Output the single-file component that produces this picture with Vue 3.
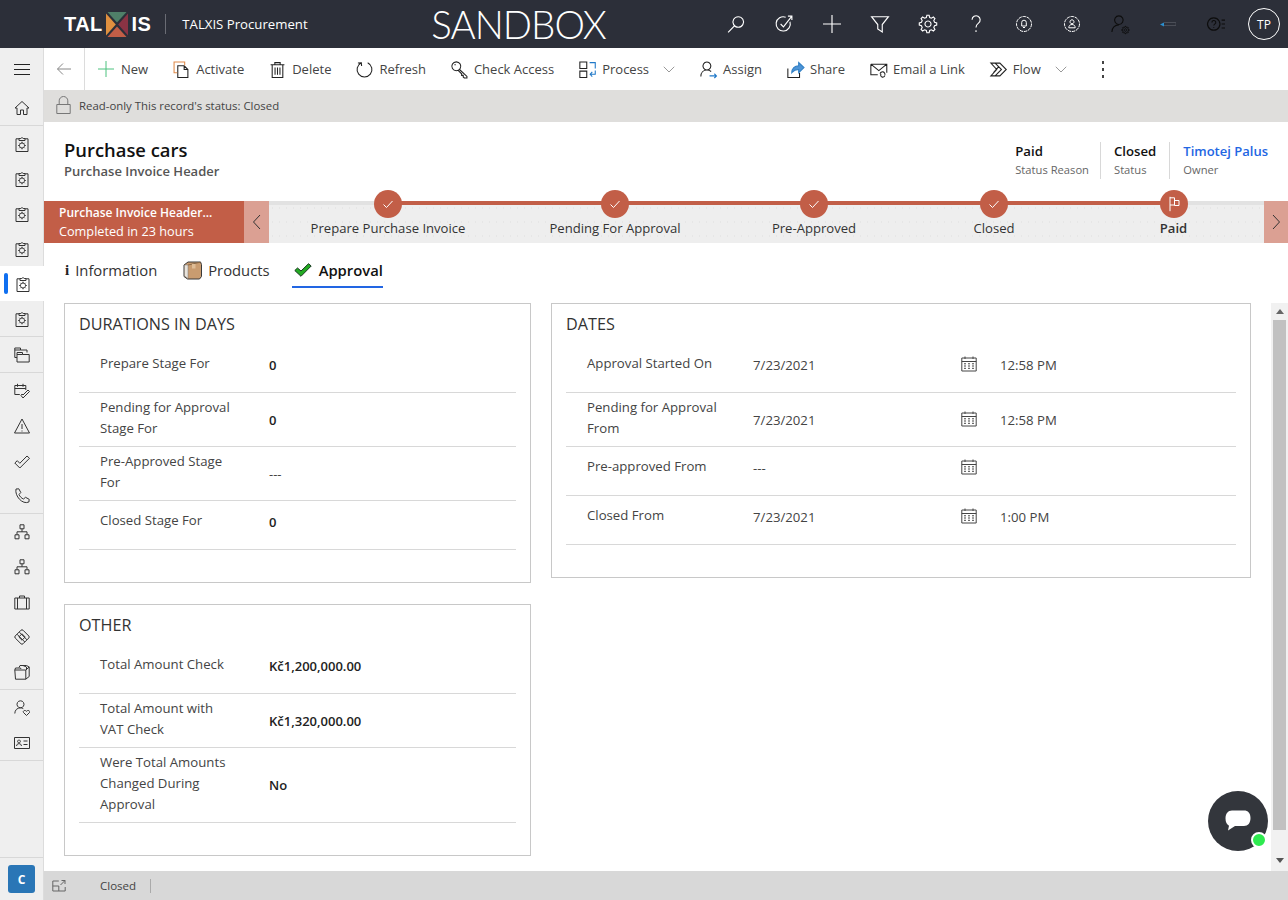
<script setup>
// gear outline for the settings button
function gearPath(cx, cy, outer, inner, teeth) {
  const step = (Math.PI * 2) / teeth
  const pts = []
  for (let i = 0; i < teeth; i++) {
    const a = i * step
    pts.push([a - step * 0.16, outer], [a + step * 0.16, outer], [a + step * 0.32, inner], [a + step * 0.68, inner])
  }
  const d = pts.map(([a, r], i) => `${i ? 'L' : 'M'}${(cx + Math.cos(a) * r).toFixed(2)} ${(cy + Math.sin(a) * r).toFixed(2)}`)
  return d.join('') + 'z'
}

const icons = {
  search: 'M10 1.5a4.7 4.7 0 1 1-.01 0zM6.6 9.6 1 15.5',
  target: 'M13.3 6A6.3 6.3 0 1 1 9.500 2M5 8l2.500 2.500L15 1M11.500 1H15v3.500',
  plus: 'M8 0v16M0 8h16',
  filter: 'M.5 1.500h15L10 8.500V15l-4-2.500V8.500z',
  gear: gearPath(8, 8, 7.8, 6, 8) + 'M8 5.300a2.700 2.700 0 1 1-.01 0z',
  question: 'M4.500 4.200a3.600 3.600 0 1 1 5.700 3C8.800 8.300 8 9.200 8 11M8 13.500V15',
  bell: 'M8 4.200a2.300 2.300 0 0 1 2.300 2.300V10H5.700V6.500A2.300 2.300 0 0 1 8 4.200zM7 11.500h2',
  person: 'M8 3.800a2 2 0 1 1-.01 0zM4.800 11.800c0-2 1.200-3.300 3.200-3.300s3.200 1.300 3.200 3.300z',
  personGear: 'M7 .8a3.800 3.800 0 1 1-.01 0zM.8 15c0-3.600 2.600-6.200 6.200-6.200',
  helpList: 'M6 2.500a5.500 5.500 0 1 1-.01 0zM4.400 6.700a1.700 1.700 0 1 1 2.500 1.400c-.6.4-.9.7-.9 1.300M6 10.800v.8M13 4.500h3M13 8h3M13 11.500h3',
  back: 'M15 8H1.500M7 2.500 1.500 8 7 13.500',
  activate: 'M4.500 4.500h6l3.500 3.500v7.500H4.500zM10.500 4.500V8H14',
  trash: 'M1.500 3.500h13M5.500 3.500v-2h5v2M3 3.500v12h10v-12M5.700 6v7M8 6v7M10.300 6v7',
  refresh: 'M5 1.700A7 7 0 1 0 11 1.700M1.800 1.800 5 1.700l.3 3',
  key: 'M5 .8a4.200 4.200 0 1 1-.01 0zM8 8l7 6.500V16h-2.500l-1-1v-1.500H10V12L6.700 8.800M3.200 3.500h1.300',
  process: 'M.8 1h6.500v6H.8zM.8 9.500h6.500v6H.8z',
  assign: 'M6.500 1a3.700 3.700 0 1 1-.01 0zM.8 14.500c0-3.500 2.400-6 5.700-6 1.600 0 3 .5 4 1.400',
  share: 'M.8 7v8.500h11V11',
  email: 'M.8 3h15v8M.8 3v10h6.500M.8 3l7.500 6 7.500-6M9.500 12a2.300 2.300 0 1 1 4.500 1M14 13.500a2 2 0 1 1-3.600-1.500',
  flow: 'M.8 2h8.500l6 6-6 6H.8l5.500-6zM4.800 2l6 6-6 6M3.300 11 8 5.500',
  chevron: 'M1 5l7 7 7-7',
  home: 'M8 1.500 1 8h2v6.500h3.500V10h3v4.500H13V8h2z',
  clip: 'M5 2.800H2v12.700h12V2.800h-3M5 4.500v-2h1.800a1.300 1.300 0 0 1 2.400 0H11v2zM8 7a2.500 2.500 0 1 1-.01 0zM8 5.700v1.300M8 12v1.300M4.200 9.500h1.300M10.500 9.500h1.300M5.300 6.800l1 1M9.700 11.200l1 1M10.700 6.800l-1 1M6.300 11.200l-1 1',
  folders: 'M.8 1h5.700v2h6.500v2.500M.8 1v9.500H3M.8 3h5.700M3 5.500h5.500v2h6.700V15H3zM3 7.500h5.500',
  task: 'M.8 2.500h11V7M.8 2.500v9h5M3.500 .8v3M9 .8v3M.8 5.500h11M7 12.500l2 2.500 6.500-6.500L14 7l-5 5-1-1z',
  warning: 'M8 1 15.500 15H.5zM8 6v5M8 12.500v1',
  check: 'M.8 10l5 5L15.500 5.300 13 3 5.800 10.300 3.300 7.700z',
  phone: 'M2 1 4.800.8l2 3.700L5 6.500c.8 2 2.500 3.800 4.500 4.500L11.500 9.300l3.700 2-.3 2.700C8.500 17 .5 8 2 1z',
  tree: 'M6 .8h4v4H6zM1 10.800h4v4H1zM11 10.800h4v4h-4zM8 4.800v3M3 10.800V7.800h10v3',
  case: 'M.8 4h14.400v11H.8zM5.500 4V2h5v2M3.500 4v11M12.500 4v11',
  deal: 'M7 1.200a1.500 1.500 0 0 1 2 0l5.800 5.800a1.500 1.500 0 0 1 0 2L9 14.800a1.500 1.500 0 0 1-2 0L1.200 9a1.500 1.500 0 0 1 0-2zM3 5.200 10.800 13M5.200 3 13 10.800M4.800 8 8 4.800 11.200 8 8 11.200z',
  archive: 'M.8 6h11v9.200H1.500zM.8 6l.7-2h5l.5 1M5 3.500 6 1.500h6.500L15.200 3v9.500l-3.500 2.700M11.800 6l3.400-3M9 1.500l3.500 1.500V6',
  personHeart: 'M6.500 .8a3.500 3.500 0 1 1-.01 0zM.8 13.500c0-3.300 2.400-5.700 5.700-5.700 1 0 2 .3 2.800.8M12.500 15.500l-3-3c-1-1.600 1.500-3 3-1.200 1.500-1.800 4-.4 3 1.200z',
  card: 'M.5 2.500h15v11H.5zM5 5a1.400 1.400 0 1 1-.01 0zM2.600 11c0-1.500 1-2.300 2.400-2.300s2.400.8 2.400 2.300M9.500 6h4M9.500 9.500h4',
  lock: 'M.8 8.500h13.400v9H.8zM3.200 8.500V4.800a4.300 4.300 0 0 1 8.600 0v3.700',
  calendar: 'M.8 2h14.400v13H.8zM.8 5.500h14.400M4 .5V3M12 .5V3M3 7.800h2M7 7.800h2M11 7.800h2M3 10h2M7 10h2M11 10h2M3 12.300h2M7 12.300h2M11 12.300h2',
  expand: 'M.8 2h6M.8 2v10h12.400V8M.8 7h6v5M8.500 6l4.500-4.500M9.500 1.500H13V5',
  flag: 'M4 .8v14.400M4 1.800h4.500V9H4M8.500 4.500H13V9.500H8.500z',
  tick: 'M3.500 8.500l3 3 6-6.500',
}

// coloured second stroke of some command icons
const accents = {
  activate: { d: 'M4 11H1V1h10v3', tone: 'orange' },
  process: { d: 'M10 1.500h5.300v5.500M15.300 9v3.500H10.500M12.500 10.300l-2 2.200 2 2.200', tone: 'blue' },
  assign: { d: 'M9 14h6.500M13.500 12l2 2-2 2', tone: 'blue' },
}

const commands = [
  { label: 'Activate', icon: 'activate' },
  { label: 'Delete', icon: 'trash' },
  { label: 'Refresh', icon: 'refresh' },
  { label: 'Check Access', icon: 'key' },
  { label: 'Process', icon: 'process', chevron: true },
  { label: 'Assign', icon: 'assign' },
  { label: 'Share', icon: 'share' },
  { label: 'Email a Link', icon: 'email' },
  { label: 'Flow', icon: 'flow', chevron: true },
]

const navGroups = [
  ['home'],
  ['clip', 'clip', 'clip', 'clip', 'clip', 'clip'],
  ['folders'],
  ['task', 'warning', 'check', 'phone'],
  ['tree', 'tree', 'case', 'deal', 'archive'],
  ['personHeart', 'card'],
]

const stages = [
  { label: 'Prepare Purchase Invoice' },
  { label: 'Pending For Approval' },
  { label: 'Pre-Approved' },
  { label: 'Closed' },
  { label: 'Paid', current: true },
]

const durations = [
  { label: 'Prepare Stage For', value: '0' },
  { label: 'Pending for Approval Stage For', value: '0', lines: 2 },
  { label: 'Pre-Approved Stage For', value: '---', lines: 2, empty: true },
  { label: 'Closed Stage For', value: '0' },
]

const other = [
  { label: 'Total Amount Check', value: 'Kč1,200,000.00' },
  { label: 'Total Amount with VAT Check', value: 'Kč1,320,000.00', lines: 2 },
  { label: 'Were Total Amounts Changed During Approval', value: 'No', lines: 3 },
]

const dates = [
  { label: 'Approval Started On', date: '7/23/2021', time: '12:58 PM' },
  { label: 'Pending for Approval From', date: '7/23/2021', time: '12:58 PM', lines: 2 },
  { label: 'Pre-approved From', date: '---', time: '', empty: true },
  { label: 'Closed From', date: '7/23/2021', time: '1:00 PM' },
]
</script>

<template>
  <div class="page">
    <header class="topbar">
      <div class="logo">
        <span>TAL</span>
        <svg class="art logo-x" width="22" height="25" viewBox="0 0 22 25">
          <path d="M1.500 0h19L11 10.500z" fill="#4f7f68" />
          <path d="M0 1.500V23.500L9.800 12.500z" fill="#e0903f" />
          <path d="M22 1.500V23.500L12.200 12.500z" fill="#8a3344" />
          <path d="M1.500 25h19L11 14.500z" fill="#c25e47" />
        </svg>
        <span>IS</span>
      </div>
      <div class="app-name">TALXIS Procurement</div>
      <div class="sandbox">SANDBOX</div>
      <div class="top-icons">
        <span class="top-icon"><svg class="i18" viewBox="0 0 16 16"><path :d="icons.search" /></svg></span>
        <span class="top-icon"><svg class="i18" viewBox="0 0 16 16"><path :d="icons.target" /></svg></span>
        <span class="top-icon"><svg class="i18" viewBox="0 0 16 16"><path :d="icons.plus" /></svg></span>
        <span class="top-icon"><svg class="i18" viewBox="0 0 16 16"><path :d="icons.filter" /></svg></span>
        <span class="top-icon"><svg class="i18" viewBox="0 0 16 16"><path :d="icons.gear" /></svg></span>
        <span class="top-icon"><svg class="i18" viewBox="0 0 16 16"><path :d="icons.question" /></svg></span>
        <span class="top-icon">
          <svg class="i16" viewBox="0 0 16 16"><circle class="dashed" cx="8" cy="8" r="7.500" /><path :d="icons.bell" /></svg>
        </span>
        <span class="top-icon">
          <svg class="i16" viewBox="0 0 16 16"><circle class="dashed" cx="8" cy="8" r="7.500" /><path :d="icons.person" /></svg>
        </span>
        <span class="top-icon dark">
          <svg class="i18" viewBox="0 0 16 16">
            <path :d="icons.personGear" />
            <path class="small-gear" :d="icons.gear" transform="translate(9.500 10) scale(.42)" />
          </svg>
        </span>
        <span class="top-icon">
          <svg class="art" width="16" height="5" viewBox="0 0 16 5">
            <path d="M4 .5h12v3H4" fill="none" stroke="#4b4e57" />
            <path d="M0 2.500l4-2v4z" fill="#2a8fd0" />
          </svg>
        </span>
        <span class="top-icon dark"><svg class="i18" viewBox="0 0 16 16"><path :d="icons.helpList" /></svg></span>
        <span class="top-icon"><span class="avatar">TP</span></span>
      </div>
    </header>

    <div class="body">
      <nav class="sidebar">
        <div class="burger"><span></span><span></span><span></span></div>
        <div v-for="(group, g) in navGroups" :key="g" class="nav-group">
          <div
            v-for="(name, n) in group"
            :key="n"
            class="nav-item"
            :class="{ selected: g === 1 && n === 4 }"
          >
            <svg class="i16" viewBox="0 0 16 16"><path :d="icons[name]" /></svg>
          </div>
        </div>
        <div class="nav-bottom"><span class="badge">C</span></div>
      </nav>

      <main class="main">
        <div class="commandbar">
          <div class="back"><svg class="i16 grey" viewBox="0 0 16 16"><path :d="icons.back" /></svg></div>
          <div class="cmd first">
            <svg class="i16 green" viewBox="0 0 16 16"><path :d="icons.plus" /></svg>
            <span>New</span>
          </div>
          <div v-for="c in commands" :key="c.label" class="cmd" :class="{ 'has-chevron': c.chevron }">
            <svg class="cmd-icon" viewBox="0 0 16 16">
              <path :d="icons[c.icon]" />
              <path v-if="accents[c.icon]" :class="accents[c.icon].tone" :d="accents[c.icon].d" />
              <path v-if="c.icon === 'share'" class="share-arrow" d="M4.500 11c0-3.800 2.800-6.500 6.500-6.500V1.500l5 4.700-5 4.800V8c-3 0-4.800 1-6.500 3z" />
            </svg>
            <span>{{ c.label }}</span>
            <svg v-if="c.chevron" class="chev" viewBox="0 0 16 16"><path :d="icons.chevron" /></svg>
          </div>
          <div class="more"><i></i><i></i><i></i></div>
        </div>

        <div class="notice">
          <svg class="lock" viewBox="0 0 15 18"><path :d="icons.lock" /></svg>
          <span>Read-only This record's status: Closed</span>
        </div>

        <div class="record-head">
          <div>
            <h1>Purchase cars</h1>
            <div class="entity">Purchase Invoice Header</div>
          </div>
          <div class="head-fields">
            <div class="head-field">
              <b>Paid</b>
              <small>Status Reason</small>
            </div>
            <div class="head-field">
              <b>Closed</b>
              <small>Status</small>
            </div>
            <div class="head-field">
              <b class="link">Timotej Palus</b>
              <small>Owner</small>
            </div>
          </div>
        </div>

        <div class="bpf">
          <div class="bpf-active">
            <b>Purchase Invoice Header...</b>
            <span>Completed in 23 hours</span>
          </div>
          <div class="bpf-nav">
            <svg width="10" height="16" viewBox="0 0 10 16"><path d="M8 1 1.500 8 8 15" /></svg>
          </div>
          <div class="stages">
            <div class="track"></div>
            <div class="track-done"></div>
            <div v-for="s in stages" :key="s.label" class="stage" :class="{ current: s.current }">
              <span class="dot">
                <svg class="i16 white" viewBox="0 0 16 16"><path :d="s.current ? icons.flag : icons.tick" /></svg>
              </span>
              <span class="stage-label">{{ s.label }}</span>
            </div>
          </div>
          <div class="bpf-nav next">
            <svg width="10" height="16" viewBox="0 0 10 16"><path d="M2 1l6.500 7L2 15" /></svg>
          </div>
        </div>

        <div class="tabs">
          <div class="tab info"><span class="info-i">i</span> Information</div>
          <div class="tab">
            <svg class="art" width="19" height="19" viewBox="0 0 19 19">
              <path d="M1 4l4-3h12.500l1 2.500v12l-2 2.500H4.500L1 15.500z" fill="#c99c70" stroke="#3a3a3a" />
              <path d="M1.500 4h3.500v13.500l-3.500-2.500z" fill="#e9e4dc" stroke="#777" stroke-width=".5" />
              <path d="M5 4l12.500-2.800" fill="none" stroke="#8a6a48" />
              <path d="M9 3h3.500v4.500H9z" fill="#dfbd96" />
            </svg>
            Products
          </div>
          <div class="tab active">
            <svg class="art" width="18" height="14" viewBox="0 0 18 14">
              <path d="M.8 7.500 3.500 5 7 8l7.500-7.300L17.200 3 7 13.300z" fill="#22aa22" stroke="#17381f" />
            </svg>
            Approval
          </div>
        </div>

        <div class="content-wrap">
          <div class="content">
            <div class="col-left">
              <section class="box">
                <h2>DURATIONS IN DAYS</h2>
                <div v-for="r in durations" :key="r.label" class="row" :class="'lines' + (r.lines || 1)">
                  <div class="label">{{ r.label }}</div>
                  <div class="value" :class="{ empty: r.empty }">{{ r.value }}</div>
                </div>
              </section>
              <section class="box">
                <h2>OTHER</h2>
                <div v-for="r in other" :key="r.label" class="row" :class="'lines' + (r.lines || 1)">
                  <div class="label">{{ r.label }}</div>
                  <div class="value">{{ r.value }}</div>
                </div>
              </section>
            </div>
            <section class="box dates-box">
              <h2>DATES</h2>
              <div v-for="r in dates" :key="r.label" class="row date-row" :class="'lines' + (r.lines || 1)">
                <div class="label">{{ r.label }}</div>
                <div class="date" :class="{ empty: r.empty }">{{ r.date }}</div>
                <svg class="i16 cal" viewBox="0 0 16 16"><path :d="icons.calendar" /></svg>
                <div class="time">{{ r.time }}</div>
              </div>
            </section>
          </div>
          <div class="scrollbar">
            <span class="arrow up"></span>
            <span class="thumb"></span>
            <span class="arrow down"></span>
          </div>
          <div class="chat">
            <svg class="art" width="26" height="22" viewBox="0 0 26 22">
              <path d="M7 .5h12c4 0 6.500 2.500 6.500 7.500s-2.500 8-6.500 8H10L3 20.500l1-4.800C1.800 14.500.5 12 .5 8.500.5 3.500 3 .5 7 .5z" fill="#fff" />
            </svg>
            <span class="online"></span>
          </div>
        </div>

        <footer class="footer">
          <svg class="i14" viewBox="0 0 14 14"><path :d="icons.expand" /></svg>
          <span class="foot-status">Closed</span>
        </footer>
      </main>
    </div>
  </div>
</template>

<style scoped>
.page {
  width: 1288px;
  height: 900px;
  overflow: hidden;
  display: flex;
  flex-direction: column;
  font-family: "Open Sans", "Liberation Sans", sans-serif;
  font-size: 13px;
  color: #333;
  background: #fff;
}

svg:not(.art) path,
svg:not(.art) circle {
  fill: none;
  stroke: currentColor;
  stroke-width: 1;
}
svg:not(.art) path.orange { stroke: #e08a4a; }
svg:not(.art) path.blue { stroke: #1f78c8; }
svg:not(.art) path.share-arrow {
  fill: #4d94d6;
  stroke: #2f7fc4;
}
svg:not(.art) circle.dashed { stroke-dasharray: 3.4 .8; }
svg:not(.art) path.small-gear { stroke-width: 2; }

.i18 { width: 18px; height: 18px; overflow: visible; }
.i16 { width: 16px; height: 16px; flex: none; }
.i14 { width: 14px; height: 14px; }

.topbar {
  height: 48px;
  flex: none;
  display: flex;
  align-items: center;
  background: #2c2f39;
  color: #fff;
}
.logo {
  display: flex;
  align-items: center;
  margin-left: 64px;
  padding-right: 14px;
  border-right: 1px solid #6a6c74;
  height: 20px;
  font-family: "Liberation Sans", sans-serif;
  font-weight: 700;
  font-size: 20px;
  letter-spacing: .4px;
}
.logo-x { margin: 0 4px 0 3px; }
.app-name {
  margin-left: 16px;
  font-size: 13.2px;
  width: 125px;
  white-space: nowrap;
}
.sandbox {
  margin-left: 124px;
  font-family: Lato, "Open Sans", sans-serif;
  font-size: 38.5px;
  line-height: 48px;
  height: 48px;
  font-weight: 300;
  letter-spacing: -1px;
}
.top-icons {
  display: flex;
  margin-left: auto;
}
.top-icon {
  width: 48px;
  height: 48px;
  display: flex;
  align-items: center;
  justify-content: center;
}
.top-icon.dark { color: #0d0d0d; }
.avatar {
  width: 32px;
  height: 32px;
  border: 1px solid #fff;
  border-radius: 50%;
  box-sizing: border-box;
  display: flex;
  align-items: center;
  justify-content: center;
  font-size: 12px;
}

.body {
  flex: 1;
  display: flex;
  min-height: 0;
}
.sidebar {
  width: 44px;
  flex: none;
  display: flex;
  flex-direction: column;
  background: #efefef;
  box-sizing: border-box;
  border-right: 1px solid #dcdcdc;
}
.burger {
  height: 42px;
  flex: none;
  display: flex;
  flex-direction: column;
  justify-content: center;
  gap: 4px;
  padding-left: 14px;
}
.burger span {
  width: 16px;
  height: 1px;
  background: #222;
}
.nav-group {
  border-bottom: 1px solid #d8d8d8;
  flex: none;
}
.nav-item {
  height: 35px;
  display: flex;
  align-items: center;
  justify-content: center;
  position: relative;
  color: #333;
  padding-left: 1px;
  box-sizing: border-box;
}
.nav-item.selected {
  background: #fff;
  margin-right: -1px;
}
.nav-item.selected::before {
  content: "";
  position: absolute;
  left: 4px;
  top: 7px;
  width: 4px;
  height: 21px;
  border-radius: 2px;
  background: #0f6ff0;
}
.nav-bottom {
  margin-top: auto;
  height: 43px;
  flex: none;
  border-top: 1px solid #d8d8d8;
  box-sizing: border-box;
  padding: 7px 0 0 8px;
  display: flex;
  align-items: flex-start;
}
.badge {
  width: 27px;
  height: 28px;
  border-radius: 3px;
  background: #2a76b6;
  color: #fff;
  font-weight: 700;
  font-size: 12px;
  display: flex;
  align-items: center;
  justify-content: center;
}

.main {
  flex: 1;
  min-width: 0;
  display: flex;
  flex-direction: column;
}
.commandbar {
  height: 42px;
  flex: none;
  display: flex;
  align-items: center;
  color: #444;
}
.back {
  width: 41px;
  height: 42px;
  box-sizing: border-box;
  border-right: 1px solid #dcdcdc;
  display: flex;
  align-items: center;
  justify-content: center;
}
.grey { color: #888; }
.green { color: #4cc27e; }
.cmd {
  display: flex;
  align-items: center;
  gap: 6px;
  margin-right: 25px;
  white-space: nowrap;
  font-size: 13px;
}
.cmd.first {
  margin-left: 13px;
  gap: 7px;
}
.cmd-icon {
  width: 17px;
  height: 17px;
  flex: none;
  color: #222;
  overflow: visible;
}
.cmd .chev {
  width: 12px;
  height: 12px;
  margin-left: 8px;
  color: #777;
}
.more {
  display: flex;
  flex-direction: column;
  gap: 4px;
  margin-left: 10px;
}
.more i {
  width: 2px;
  height: 3px;
  background: #444;
}

.notice {
  height: 32px;
  flex: none;
  box-sizing: border-box;
  padding: 0 0 2px 12px;
  background: #dfdedc;
  display: flex;
  align-items: center;
  gap: 8px;
  font-size: 11.4px;
  color: #444;
}
.lock {
  width: 15px;
  height: 18px;
  color: #777;
}

.record-head {
  height: 79px;
  flex: none;
  box-sizing: border-box;
  padding: 15px 20px 0;
  display: flex;
  justify-content: space-between;
}
h1 {
  margin: 0;
  font-size: 18.4px;
  line-height: 25px;
  font-weight: 600;
  color: #111;
}
.entity {
  margin-top: 1px;
  font-size: 13px;
  font-weight: 600;
  color: #555;
  line-height: 17px;
}
.head-fields {
  display: flex;
  padding-top: 5px;
}
.head-field {
  display: flex;
  flex-direction: column;
  height: 37px;
  padding: 0 13px;
  border-left: 1px solid #d8d8d8;
}
.head-field:first-child {
  border-left: 0;
  padding-right: 11px;
}
.head-field:last-child {
  padding-right: 0;
}
.head-field b {
  font-size: 13.2px;
  font-weight: 600;
  color: #111;
  line-height: 18px;
}
.head-field b.link {
  font-size: 13px;
  color: #2266e3;
}
.head-field small {
  font-size: 11.2px;
  color: #666;
  line-height: 19px;
}

.bpf {
  height: 42px;
  flex: none;
  display: flex;
}
.bpf-active {
  width: 200px;
  flex: none;
  box-sizing: border-box;
  padding: 2px 0 0 15px;
  background: #c25e47;
  color: #fff;
  display: flex;
  flex-direction: column;
  font-size: 12.7px;
  line-height: 19px;
  white-space: nowrap;
}
.bpf-active b {
  font-size: 12px;
  font-weight: 600;
}
.bpf-nav {
  width: 25px;
  flex: none;
  background: #dba093;
  display: flex;
  align-items: center;
  justify-content: center;
  color: #333;
}
.bpf-nav.next { width: 24px; }
.stages {
  flex: 1;
  background-color: #eee;
  background-image: radial-gradient(#e6e6e6 .6px, transparent .7px);
  background-size: 7px 14px;
  position: relative;
  display: grid;
  grid-template-columns: 238px 216px 182px 178px 181px;
}
.track {
  position: absolute;
  left: 0;
  right: 0;
  top: 0;
  height: 4px;
  background: #e2e2e2;
}
.track-done {
  position: absolute;
  left: 119px;
  width: 786px;
  top: 0;
  height: 4px;
  background: #c25e47;
}
.stage {
  position: relative;
  display: flex;
  flex-direction: column;
  align-items: center;
  color: #333;
}
.dot {
  width: 28px;
  height: 28px;
  margin-top: -11px;
  flex: none;
  border-radius: 50%;
  background: #c25e47;
  display: flex;
  align-items: center;
  justify-content: center;
}
.white { color: #fff; }
.stage-label {
  margin-top: 1px;
  font-size: 13.1px;
  line-height: 18px;
  white-space: nowrap;
}
.stage.current .stage-label { font-weight: 600; }

.tabs {
  height: 60px;
  flex: none;
  box-sizing: border-box;
  padding: 13px 0 0 21px;
  display: flex;
  align-items: flex-start;
  gap: 22px;
}
.tab {
  display: flex;
  align-items: center;
  gap: 6px;
  height: 28px;
  font-size: 14.8px;
  color: #333;
}
.tab.info { margin-right: 4px; }
.tab.active {
  font-weight: 600;
  color: #111;
  border-bottom: 2px solid #2266e3;
  padding: 0 0 2px 2px;
  gap: 7px;
}
.info-i {
  font-family: "Liberation Serif", serif;
  font-weight: 700;
  font-size: 15px;
  color: #222;
}

.content-wrap {
  flex: 1;
  min-height: 0;
  display: flex;
  position: relative;
}
.content {
  flex: 1;
  display: flex;
  gap: 20px;
  padding: 0 20px;
  align-items: flex-start;
  overflow: hidden;
}
.col-left {
  width: 467px;
  flex: none;
  display: flex;
  flex-direction: column;
  gap: 21px;
}
.box {
  border: 1px solid #c8c8c8;
  box-sizing: border-box;
  padding: 0 14px 32px;
}
.dates-box {
  width: 700px;
  flex: none;
}
h2 {
  margin: 0;
  height: 40px;
  padding-top: 9px;
  box-sizing: border-box;
  font-size: 16.2px;
  line-height: 22px;
  font-weight: 400;
  color: #333;
}
.row {
  display: grid;
  grid-template-columns: 190px 1fr;
  border-bottom: 1px solid #d8d8d8;
  box-sizing: border-box;
  height: 49px;
  align-items: center;
}
.row.lines2 { height: 54px; }
.row.lines3 { height: 75px; }
.label {
  padding-left: 21px;
  width: 158px;
  box-sizing: border-box;
  font-size: 13.2px;
  line-height: 21px;
  color: #444;
  align-self: start;
  margin-top: 9px;
}
.lines2 .label,
.lines3 .label {
  margin-top: 4px;
}
.lines1 > :not(.label) {
  margin-bottom: 6px;
}
.value {
  font-size: 13px;
  font-weight: 600;
  color: #222;
}
.value.empty {
  font-weight: 400;
  color: #444;
}
.date-row {
  grid-template-columns: 187px 208px 39px 1fr;
}
.date,
.time {
  font-size: 13.2px;
  color: #444;
}
.cal { color: #444; }
.lines1 > .cal { margin-bottom: 8px; }
.lines2 > .cal { margin-bottom: 2px; }

.scrollbar {
  width: 17px;
  flex: none;
  background: #f1f1f1;
  display: flex;
  flex-direction: column;
  align-items: center;
  margin-left: 1px;
}
.thumb {
  width: 13px;
  height: 510px;
  background: #c1c1c1;
  flex: none;
}
.arrow {
  width: 0;
  height: 0;
  border: 4px solid transparent;
  flex: none;
}
.arrow.up {
  border-bottom: 5px solid #666;
  border-top: 0;
  margin: 6px 0 6px;
}
.arrow.down {
  border-top: 5px solid #555;
  border-bottom: 0;
  margin-top: 28px;
}
.chat {
  position: absolute;
  left: 1164px;
  top: 488px;
  width: 60px;
  height: 60px;
  border-radius: 50%;
  background: #33363c;
  display: flex;
  align-items: center;
  justify-content: center;
}
.online {
  position: absolute;
  right: 1px;
  bottom: 3px;
  width: 12px;
  height: 12px;
  border-radius: 50%;
  background: #2eea4f;
  border: 2px solid #fff;
}

.footer {
  height: 29px;
  flex: none;
  background: #d8d8d8;
  display: flex;
  align-items: center;
  padding-left: 8px;
  font-size: 11.5px;
  color: #444;
}
.foot-status {
  margin-left: 34px;
  padding-right: 14px;
  border-right: 1px solid #aaa;
  line-height: 14px;
}
.footer svg { color: #666; }
</style>

<style>
html, body { margin: 0; background: #fff; }
</style>
